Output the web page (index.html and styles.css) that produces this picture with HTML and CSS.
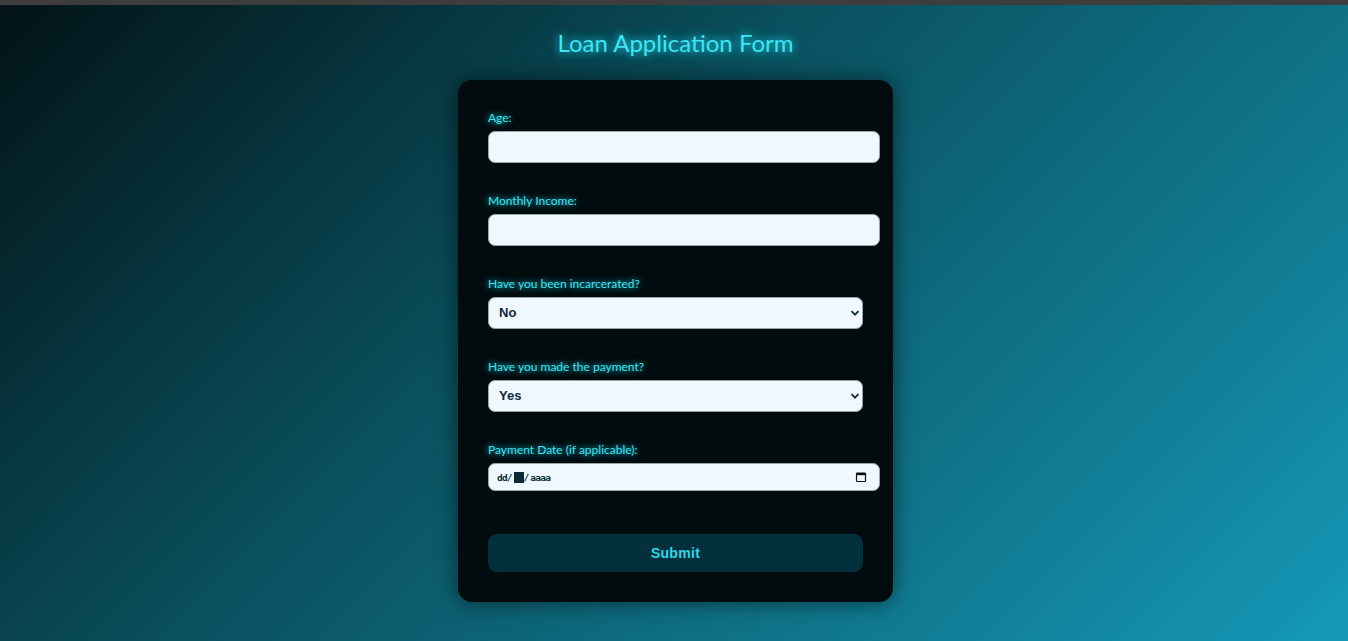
FILE: index.html
```html
<!DOCTYPE html>
<html lang="es">
<head>
<meta charset="utf-8">
<title>Loan Application Form</title>
<link rel="stylesheet" href="styles.css">
</head>
<body>
<div class="topbar"></div>
<main class="page">
  <h1 class="title">Loan Application Form</h1>
  <form class="card">
    <div class="field">
      <label class="label" for="age">Age:</label>
      <input class="input" id="age" type="text">
    </div>
    <div class="field">
      <label class="label" for="income">Monthly Income:</label>
      <input class="input" id="income" type="text">
    </div>
    <div class="field">
      <label class="label" for="jail">Have you been incarcerated?</label>
      <div class="select-wrap">
        <select class="select" id="jail"><option>No</option><option>Yes</option></select>
        <svg class="chev" viewBox="0 0 10 10" width="10" height="10"><path d="M1.5 3.2 L5 6.7 L8.5 3.2" fill="none" stroke="#0b2a33" stroke-width="1.8"/></svg>
      </div>
    </div>
    <div class="field">
      <label class="label" for="paid">Have you made the payment?</label>
      <div class="select-wrap">
        <select class="select" id="paid"><option>Yes</option><option>No</option></select>
        <svg class="chev" viewBox="0 0 10 10" width="10" height="10"><path d="M1.5 3.2 L5 6.7 L8.5 3.2" fill="none" stroke="#0b2a33" stroke-width="1.8"/></svg>
      </div>
    </div>
    <div class="field">
      <label class="label">Payment Date (if applicable):</label>
      <div class="date">
        <span class="date-text">dd/ <span class="seg">mm</span>/ aaaa</span>
        <svg class="cal" viewBox="0 0 12 12" width="12" height="12"><rect x="1.5" y="2" width="9" height="8.5" rx="0.8" fill="none" stroke="#111" stroke-width="1.2"/><rect x="1.5" y="2" width="9" height="2.2" fill="#111"/></svg>
      </div>
    </div>
    <button class="submit" type="button">Submit</button>
  </form>
</main>
</body>
</html>
```

FILE: styles.css
```css
html, body {
  margin: 0;
  padding: 0;
  height: 100%;
}
body {
  background: linear-gradient(135deg, #021316 0%, #0a4f5d 40%, #0f7388 70%, #1599b8 100%);
  font-family: "Open Sans", "Lato", sans-serif;
  overflow: hidden;
}
.topbar {
  height: 5px;
  background: #3d3d3d;
}
.page {
  display: flex;
  flex-direction: column;
  align-items: center;
  padding-left: 3px;
}
.title {
  margin: 23px 0 0;
  height: 29px;
  line-height: 29px;
  font-family: "Lato", sans-serif;
  font-weight: 400;
  font-size: 24px;
  color: #3ae6f4;
  text-shadow: 0 0 8px rgba(40, 225, 245, 0.8), 0 0 14px rgba(40, 225, 245, 0.45);
}
.card {
  margin-top: 23px;
  width: 375px;
  padding: 30px 30px 30px;
  background: #020c0e;
  border-radius: 14px;
  box-shadow: 0 0 22px rgba(0, 0, 0, 0.55);
  display: flex;
  flex-direction: column;
}
.field {
  display: flex;
  flex-direction: column;
  align-items: flex-start;
  margin-bottom: 30px;
}
.label {
  font-family: "Lato", sans-serif;
  font-size: 12px;
  line-height: 16px;
  height: 16px;
  margin-bottom: 5px;
  color: #3ae6f4;
  text-shadow: 0 0 6px rgba(40, 225, 245, 0.85), 0 0 10px rgba(40, 225, 245, 0.35);
}
.input {
  box-sizing: border-box;
  width: 392px;
  height: 32px;
  margin: 0;
  padding: 0 8px;
  border: 1px solid #9aa3a6;
  border-radius: 7px;
  background: #f0f8ff;
  outline: none;
}
.select-wrap {
  position: relative;
  width: 375px;
  height: 32px;
}
.select {
  box-sizing: border-box;
  width: 100%;
  height: 32px;
  margin: 0;
  padding: 0 10px;
  border: 1px solid #9aa3a6;
  border-radius: 7px;
  background: #f0f8ff;
  appearance: none;
  -webkit-appearance: none;
  font-family: "Liberation Sans", Arial, sans-serif;
  font-weight: 700;
  font-size: 13px;
  line-height: 28px;
  color: #0b2a33;
  outline: none;
}
.chev {
  position: absolute;
  right: 3px;
  top: 11px;
  pointer-events: none;
}
.date {
  box-sizing: border-box;
  width: 392px;
  height: 28px;
  padding: 0 12px 0 8px;
  border: 1px solid #9aa3a6;
  border-radius: 7px;
  background: #f0f8ff;
  display: flex;
  align-items: center;
  justify-content: space-between;
}
.date-text {
  font-family: "DejaVu Sans Mono", monospace;
  font-weight: 700;
  font-size: 9.5px;
  letter-spacing: -0.8px;
  word-spacing: -3px;
  color: #0b2a33;
}
.seg {
  background: #0b2a33;
  color: #0b2a33;
}
.submit {
  margin-top: 13px;
  height: 38px;
  width: 375px;
  border: none;
  border-radius: 9px;
  background: #02303c;
  color: #2cd8ea;
  font-family: "Liberation Sans", Arial, sans-serif;
  font-weight: 700;
  font-size: 14px;
  letter-spacing: 0.3px;
  cursor: pointer;
}
```
